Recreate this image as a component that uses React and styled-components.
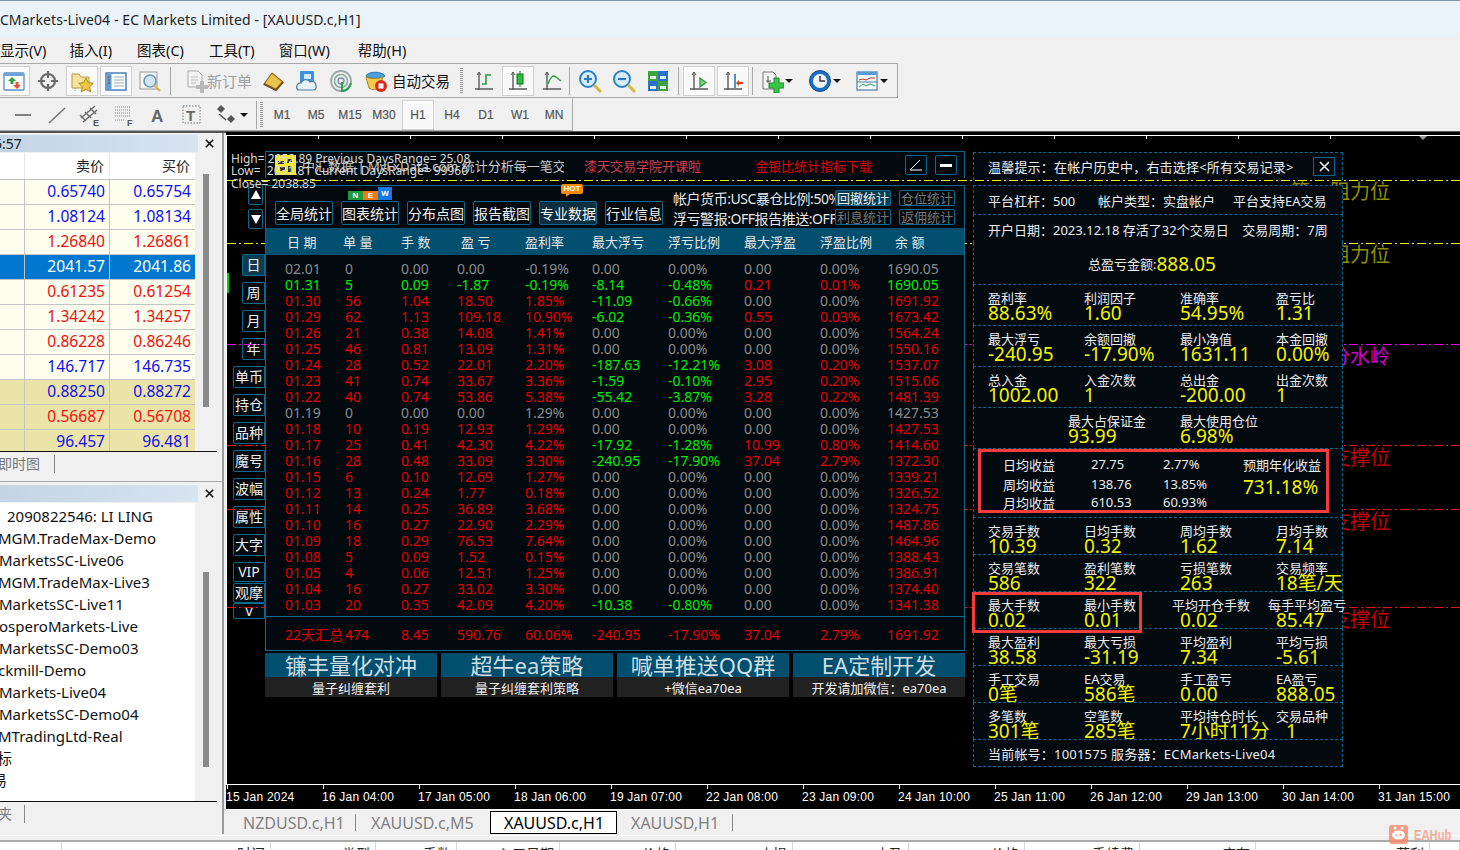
import React from "react";
import styled, { createGlobalStyle } from "styled-components";

const FONT = `"Noto Sans", "Noto Sans CJK SC", sans-serif`;
const TEAL = "#0b6a8c";
const PANEL = "#020a10";

const Global = createGlobalStyle`
  html, body { margin: 0; padding: 0; background: #f0f0f0; overflow: hidden; }
  #root { width: 1460px; height: 850px; }
`;

const Page = styled.div`
  width: 1460px; height: 850px; overflow: hidden; display: flex; flex-direction: column; position: relative;
  font-family: ${FONT}; font-size: 14px; color: #111; background: #f0f0f0;
`;
const TitleBar = styled.div`
  height: 36px; flex: none; background: #eaf3fa; border-top: 1px solid #7c95a6;
  display: flex; align-items: center; white-space: nowrap; font-size: 14px; color: #222;
`;
const TitleText = styled.span` margin-left: -8px; letter-spacing: .1px; `;
const MenuBar = styled.div`
  height: 26px; flex: none; display: flex; align-items: center; gap: 25px; padding-bottom: 2px; box-sizing: border-box;
  white-space: nowrap; font-size: 14.5px; color: #111;
`;
const MenuItem = styled.span` margin-left: ${p => p.$ml || 0}px; `;
const ToolRow = styled.div`
  height: ${p => p.$h}px; flex: none; display: flex; align-items: center; width: ${p => p.$w}px;
  border-top: 1px solid ${p => p.$top ? "#a8a8a8" : "transparent"};
  border-bottom: 1px solid #a8a8a8; border-right: 1px solid #a8a8a8; box-sizing: content-box; background: #f0f0f0;
`;
const ToolBottom = styled.div` height: 2px; flex: none; background: #555; `;
const Btn = styled.div`
  width: ${p => p.$w || 32}px; height: 30px; margin: 0 1px; flex: none; box-sizing: border-box;
  display: flex; align-items: center; justify-content: ${p => p.$w ? "flex-start" : "center"};
  padding-left: ${p => p.$pl || 0}px; white-space: nowrap;
  ${p => p.$first ? `margin-left: ${p.$first}px;` : ""}
  ${p => p.$on ? "background:#f9f9f9;border:1px solid #cfcfcf;outline:1px solid #fff;outline-offset:-2px;" : ""}
`;
const BtnLabel = styled.span`
  margin-left: ${p => p.$ml}px; font-size: ${p => p.$fs || 14}px; color: ${p => p.$c};
`;
const Sep = styled.div`
  width: 1px; height: 28px; background: #a8a8a8; flex: none;
  margin-left: ${p => p.$l}px; margin-right: ${p => p.$r}px;
`;
const Grip = styled.div`
  width: 3px; height: 26px; flex: none; margin-left: ${p => p.$l}px; margin-right: ${p => p.$r}px;
  background: repeating-linear-gradient(to bottom, #9a9a9a 0 1px, #f0f0f0 1px 2px);
`;
const Tf = styled.div`
  width: 32px; height: 30px; margin: 0 1px; flex: none; box-sizing: border-box;
  display: flex; align-items: center; justify-content: center;
  font-family: "Liberation Sans", sans-serif; font-size: 12px; color: #555; -webkit-text-stroke: .2px #555;
  ${p => p.$on ? "background:#f9f9f9;border:1px solid #cfcfcf;outline:1px solid #fff;outline-offset:-2px;" : ""}
`;
const Caret = styled.span`
  width: 0; height: 0; border-left: 4px solid transparent; border-right: 4px solid transparent;
  border-top: 4px solid #111; margin-left: ${p => p.$ml || 1}px;
`;

const Workspace = styled.div` flex: none; height: 701px; display: flex; `;
const Sidebar = styled.div`
  width: 222px; flex: none; display: flex; flex-direction: column; border-right: 1px solid #a0a0a0; background: #f0f0f0;
`;
const DockTitle = styled.div`
  height: 17px; flex: none; display: flex; margin-top: ${p => p.$mt}px; align-items: center;
`;
const TitleGrad = styled.div`
  width: 198px; height: 17px; flex: none; background: linear-gradient(to right, #c3d4e4, #d8e4f0);
  font-size: 14px; line-height: 17px; white-space: nowrap; overflow: hidden; color: #222;
`;
const ClippedClock = styled.span` margin-left: -14px; `;
const DockClose = styled.div`
  flex: 1; display: flex; justify-content: center; padding-right: 2px;
`;
const DockBody = styled.div`
  height: ${p => p.$h}px; flex: none; display: flex; width: 217px; margin-top: 1px; border-bottom: 1px solid #111; box-sizing: border-box;
`;
const DockMain = styled.div` width: 195px; flex: none; overflow: hidden; background: #fff; `;
const Scroll = styled.div` flex: 1; background: #f0f0f0; padding: ${p => p.$t}px 0 0 8px; box-sizing: border-box; `;
const Thumb = styled.div` width: 6px; height: ${p => p.$h}px; background: #8a8a8a; `;
const QuoteHead = styled.div`
  display: grid; grid-template-columns: 24px 85px 86px; height: 27px; background: #fff;
  border-bottom: 1px solid #c0c0c0; box-sizing: border-box;
`;
const HeadCell = styled.div`
  border-left: 1px solid #e4e4e4; text-align: right; padding-right: 5px; line-height: 26px; font-size: 14px; color: #222;
  &:first-child { border-left: 0; }
`;
const QuoteRow = styled.div`
  display: grid; grid-template-columns: 24px 85px 86px; height: 25px; box-sizing: border-box;
  border-bottom: 1px solid #c4c4c4; background: ${p => p.$bg}; color: ${p => p.$c};
`;
const QuoteCell = styled.div`
  border-left: 1px solid #c4c4c4; text-align: right; padding-right: 4px; line-height: 22px; font-size: 15.6px;
  &:first-child { border-left: 0; }
`;
const DockTabs = styled.div`
  height: ${p => p.$h}px; flex: none; width: 217px; display: flex; align-items: flex-start; padding-top: 3px; box-sizing: border-box;
`;
const DockTabText = styled.div`
  font-size: 14px; color: #777; margin-left: ${p => p.$ml}px; width: ${p => p.$w}px; border-right: 1px solid #888;
  height: 18px; line-height: 18px; overflow: hidden; white-space: nowrap; flex: none;
`;
const DockRule = styled.div` height: 1px; flex: none; background: #a8a8a8; `;
const NavItem = styled.div`
  height: 22px; line-height: 22px; font-size: 15px; white-space: nowrap; color: #111;
  margin-left: ${p => p.$x}px;
`;
const NavList = styled.div` padding-top: 2px; `;

const ChartCol = styled.div`
  flex: 1; display: flex; flex-direction: column; padding-left: 2px; border-left: 1px solid #999; min-width: 0;
`;
const Canvas = styled.div`
  height: 678px; flex: none; margin-top: -1px; background: #000; position: relative; overflow: hidden;
  display: flex; flex-direction: column; border-bottom: 1px solid #fff; box-sizing: border-box;
`;
const TopEdge = styled.div`
  margin-top: 3px; height: 5px; flex: none; border-top: 1px solid #fff; border-left: 1px solid #fff; box-sizing: border-box;
  background: repeating-linear-gradient(to right, transparent 0 91px, #fff 91px 92px);
  background-size: 92px 3px; background-repeat: repeat-x;
`;
const Plot = styled.div` flex: 1; border-left: 1px solid #fff; `;
const Axis = styled.div`
  height: 25px; flex: none; border-top: 1px solid #fff; display: flex; box-sizing: border-box; color: #fff;
  font-family: "Liberation Sans", sans-serif; font-size: 12px; letter-spacing: .22px; white-space: nowrap;
`;
const Tick = styled.div`
  width: 96px; flex: none; position: relative; padding-top: 5px; line-height: 14px;
  &::before { content: ""; position: absolute; left: 1px; top: 0; width: 1px; height: 4px; background: #fff; }
`;
const PriceLine = styled.div`
  position: absolute; left: 1px; right: 0; top: ${p => p.$y - 132}px; height: 1px; z-index: 3;
  background: repeating-linear-gradient(to right, ${p => p.$c} 0 9px, transparent 9px 12px, ${p => p.$c} 12px 14px, transparent 14px 17px);
`;
const PriceLabel = styled.div`
  position: absolute; right: 70px; top: ${p => p.$y - 132}px; font-size: 20px; line-height: 26px; color: ${p => p.$c}; z-index: 1;
  white-space: nowrap;
`;
const ShiftMark = styled.div`
  position: absolute; left: ${1419 - 226}px; top: 4px; width: 0; height: 0; z-index: 2;
  border-left: 4px solid transparent; border-right: 4px solid transparent; border-top: 4px solid #9a9a9a;
`;
const CandleBit = styled.div`
  position: absolute; left: 1px; top: ${273 - 132}px; width: 2px; height: 20px; background: #00d000; z-index: 2;
`;
const HiLo = styled.div`
  position: absolute; left: 5px; top: 21px; z-index: 6; font-size: 12px; line-height: 12.4px; color: #d8d8d8; white-space: pre;
  font-family: "Noto Sans", sans-serif;
`;

/* left side tabs */
const SideStack = styled.div`
  position: absolute; left: 0; top: ${184 - 132}px; width: 39px; display: flex; flex-direction: column; align-items: flex-end; z-index: 2;
`;
const Arrow = styled.div`
  width: 15px; height: ${p => p.$h}px; margin-right: 2px; margin-top: ${p => p.$mt || 0}px; border: 1px solid ${TEAL}; border-radius: 2px; box-sizing: border-box;
  display: flex; align-items: center; justify-content: center; background: ${PANEL};
`;
const SideTab = styled.div`
  width: ${p => p.$wide ? 32 : 23}px; height: ${p => p.$h || 22}px; margin-top: ${p => p.$mt ?? 6}px; box-sizing: border-box;
  border: 1px solid ${TEAL}; border-radius: 2px 0 0 2px;
  display: flex; align-items: center; justify-content: center; color: #eee; font-size: 14px; line-height: 1;
  background: ${p => p.$on ? "#0d3b4f" : PANEL};
`;

/* banner + main panel */
const Banner = styled.div`
  position: absolute; left: 39px; top: ${151 - 132}px; width: 700px; height: 27px; box-sizing: border-box; z-index: 4;
  background: ${PANEL}; border: 1px solid ${TEAL}; border-bottom: 0; display: flex; align-items: center; padding-left: 9px;
`;
const LogoBox = styled.div` width: 21px; height: 20px; flex: none; margin-right: 6px; `;
const BannerText = styled.div`
  width: 262px; flex: none; overflow: hidden; white-space: nowrap; font-size: 13px; color: #c9c9c9; margin-right: 20px;
`;
const BannerRed = styled.div`
  width: 117px; flex: none; white-space: nowrap; font-size: 13px; color: ${p => p.$c}; margin-right: ${p => p.$mr}px;
`;
const SqBtn = styled.div`
  width: 22px; height: 20px; flex: none; box-sizing: border-box; border: 1px solid ${TEAL}; border-radius: 2px; margin-left: ${p => p.$ml}px;
  display: flex; align-items: center; justify-content: center; background: ${PANEL};
`;
const Minus = styled.div` width: 12px; height: 3px; background: #fff; `;
const MainPanel = styled.div`
  position: absolute; left: 39px; top: ${185 - 132}px; width: 700px; height: 466px; box-sizing: border-box; z-index: 4;
  background: ${PANEL}; border: 1px solid ${TEAL}; display: flex; flex-direction: column;
`;
const PanelTools = styled.div`
  height: 42px; flex: none; position: relative; display: flex; align-items: flex-end; padding: 0 0 3px 9px; box-sizing: border-box; gap: 8px;
`;
const ToolBox = styled.div`
  width: 58px; height: 24px; flex: none; box-sizing: border-box; border: 1px solid ${TEAL}; border-radius: 2px;
  display: flex; align-items: center; justify-content: center; font-size: 14px; color: #f2f2f2; white-space: nowrap;
  background: ${p => p.$on ? "#0e2f40" : "#03090d"};
`;
const InfoCol = styled.div`
  width: 162px; flex: none; margin-left: 2px; height: 36px; font-size: 14px; line-height: 20px; color: #e8e8e8; white-space: nowrap;
  letter-spacing: -.45px;
`;
const MiniGrid = styled.div`
  display: grid; grid-template-columns: 56px 56px; grid-auto-rows: 16px; column-gap: 8px; row-gap: 3px; margin-left: -8px;
`;
const MiniBtn = styled.div`
  box-sizing: border-box; border: 1px solid ${TEAL}; border-radius: 2px; display: flex; align-items: center; justify-content: center;
  font-size: 13px; line-height: 1; white-space: nowrap; color: ${p => p.$on ? "#eee" : "#777"}; background: ${p => p.$on ? "#0b3a50" : "#03090d"};
`;
const Badges = styled.div`
  position: absolute; left: 82px; top: 1px; display: flex; align-items: flex-end; height: 13px;
`;
const Badge = styled.div`
  width: ${p => p.$w}px; height: ${p => p.$h}px; background: ${p => p.$c}; color: #fff; font-size: 8px; font-weight: 700; line-height: ${p => p.$h}px; text-align: center;
  font-family: "Liberation Sans", sans-serif;
`;
const Hot = styled.div`
  position: absolute; left: 295px; top: -2px; width: 22px; height: 10px; background: #f58a0b; color: #fff; font-size: 8px; font-weight: 700; line-height: 10px; text-align: center;
  border-radius: 2px; font-family: "Liberation Sans", sans-serif;
  &::after { content: ""; position: absolute; left: 5px; top: 10px; border-top: 3px solid #f58a0b; border-right: 4px solid transparent; }
`;
const GRID = "60px 56px 56px 68px 67px 76px 76px 76px 67px 1fr";
const TableHead = styled.div`
  height: 27px; flex: none; background: #004f6e; display: grid; grid-template-columns: ${GRID}; padding-left: 19px; align-items: center;
  color: #e6e6e6; font-size: 13px; white-space: pre;
`;
const HeadItem = styled.div` margin-left: ${p => p.$s || 0}px; `;
const TableBody = styled.div`
  flex: none; height: 362px; padding-top: 6px; box-sizing: border-box; border-bottom: 1px solid ${TEAL};
`;
const DataRow = styled.div`
  height: 16px; display: grid; grid-template-columns: ${GRID}; padding-left: 19px; font-size: 14px; line-height: 16px; white-space: nowrap;
`;
const DataCell = styled.div` color: ${p => p.$c}; `;
const SummaryRow = styled(DataRow)` margin-top: 10px; `;
const Promo = styled.div`
  position: absolute; left: 39px; top: ${653 - 132}px; width: 700px; display: grid; grid-template-columns: repeat(4, 172px); column-gap: 4px; z-index: 4;
`;
const PromoCard = styled.div` display: flex; flex-direction: column; `;
const PromoTop = styled.div`
  height: 24px; background: #004f6e; color: #cfdde2; font-size: 22px; line-height: 24px; text-align: center; white-space: nowrap;
`;
const PromoSub = styled.div`
  height: 20px; background: #222; color: #f0f0f0; font-size: 13px; line-height: 22px; text-align: center; white-space: nowrap;
`;

/* right panel */
const Right = styled.div`
  position: absolute; left: ${973 - 226}px; top: ${152 - 132}px; width: 370px; display: flex; flex-direction: column; z-index: 4;
  color: #ececec; font-size: 13px; white-space: nowrap;
`;
const RRow = styled.div`
  height: ${p => p.$h}px; flex: none; box-sizing: border-box; background: ${PANEL}; position: relative;
  border-left: 1px dashed ${TEAL}; border-right: 1px dashed ${TEAL}; border-top: 1px dashed ${TEAL};
  ${p => p.$end ? `border-bottom: 1px dashed ${TEAL};` : ""}
  margin-top: ${p => p.$mt || 0}px;
  ${p => p.$noTop ? "border-top: 0;" : ""}
`;
const LineRow = styled(RRow)`
  display: flex; align-items: center; padding-left: ${p => p.$pl ?? 14}px; padding-right: 7px; letter-spacing: ${p => p.$ls || 0}px;
`;
const LineSpan = styled.span` width: ${p => p.$w}px; flex: none; `;
const StatGrid = styled(RRow)`
  display: grid; grid-template-columns: repeat(4, 96px); padding: 5px 0 0 14px;
`;
const DuoGrid = styled(RRow)`
  display: grid; grid-template-columns: 112px 100px; padding: 5px 0 0 94px;
`;
const Cell = styled.div` display: flex; flex-direction: column; `;
const CellLabel = styled.div` height: 16px; line-height: 16px; margin-left: ${p => p.$s || 0}px; `;
const CellValue = styled.div`
  height: 15px; line-height: 15px; font-size: 19px; color: #f2f200; margin-left: ${p => p.$s || 0}px;
`;
const BigValue = styled.span` font-size: 19px; color: #f2f200; `;
const CloseX = styled.div`
  width: 22px; height: 19px; box-sizing: border-box; border: 1px solid ${TEAL}; display: flex; align-items: center; justify-content: center; margin-left: auto; flex: none;
`;
const RedBox = styled.div`
  margin: 0 0 0 4px; width: 351px; height: 64px; box-sizing: border-box; border: 3px solid #f33c3c;
  display: grid; grid-template-columns: 110px 72px 80px 1fr; grid-template-rows: 20px 20px 16px;
  padding-top: 2px; align-items: center; font-size: 13px;
`;
const YieldLabel = styled.div` text-align: right; padding-right: 36px; `;
const YieldBig = styled.div` font-size: 19px; color: #f2f200; grid-column: 4; grid-row: 2 / 4; align-self: start; line-height: 26px; `;
const RedMark = styled.div`
  position: absolute; left: -2px; top: 0; width: 170px; height: 41px; box-sizing: border-box; border: 3px solid #f33c3c; z-index: 2; pointer-events: none;
`;

const TabStrip = styled.div`
  flex: none; height: 24px; display: flex; align-items: flex-end; font-size: 16px; color: #808080; white-space: nowrap; padding-left: 17px;
`;
const DocTab = styled.div`
  height: 23px; display: flex; align-items: center; box-sizing: border-box; width: ${p => p.$w}px; padding-left: ${p => p.$pl}px; flex: none; position: relative;
  ${p => p.$on ? "background:#fff;color:#000;border:1px solid #000;" : ""}
  ${p => p.$sep ? "&::after{content:'';position:absolute;right:0;top:3px;height:17px;width:1px;background:#888;}" : ""}
`;
const Bottom = styled.div` flex: 1; display: flex; flex-direction: column; overflow: hidden; `;
const WhiteRule = styled.div` height: 1px; background: #fff; flex: none; margin-top: 1px; `;
const GrayRule = styled.div` height: 2px; background: #aaa; flex: none; margin-top: 4px; `;
const OrderHead = styled.div`
  flex: 1; background: #fff; display: grid; color: #222; font-size: 14px; overflow: hidden;
  grid-template-columns: 62px 209px 105px 81px 103px 116px 117px 116px 116px 115px 116px 174px 30px;
`;
const OrderCell = styled.div`
  border-right: 1px solid #d8d8d8; text-align: right; padding-right: 5px; line-height: 20px; padding-top: 2px; white-space: nowrap;
`;
const Water = styled.div`
  position: absolute; left: 1389px; top: 825px; display: flex; align-items: center; gap: 6px; opacity: .82;
  color: #f6a08a; font-weight: 700; font-size: 14px; font-family: "Liberation Sans", sans-serif;
`;
const WaterText = styled.span` display: block; transform: scaleX(.8); transform-origin: left center; `;

/* ---------- icons ---------- */
const S = ({ w = 24, h = 24, children }) => (
  <svg width={w} height={h} viewBox={`0 0 ${w} ${h}`} fill="none">{children}</svg>
);
const axes = (
  <>
    <path d="M7 3v18M3 20h18" stroke="#5a5a5a" strokeWidth="1.4" />
    <path d="M5 6l2-3 2 3" stroke="#5a5a5a" />
  </>
);
const I = {
  market: <S><rect x="2" y="4" width="20" height="17" rx="1" fill="#fff" stroke="#5c8fc4" strokeWidth="1.3" /><rect x="2" y="4" width="20" height="3" fill="#6ea3d8" /><path d="M10 8l-4 4h2.5v3h3v-3H14z" fill="#22a82e" /><path d="M15 20l4-4h-2.5v-3h-3v3H11z" fill="#e9503c" /></S>,
  cross: <S><circle cx="12" cy="12" r="7" stroke="#6a6a6a" strokeWidth="2.2" /><path d="M12 2v7M12 15v7M2 12h7M15 12h7" stroke="#6a6a6a" strokeWidth="2.2" /></S>,
  folder: <S><path d="M2 5h7l2 3h8v11H2z" fill="#f6e29a" stroke="#b59a4c" /><path d="M16 9l2.3 4.6 5 .7-3.6 3.5.9 5-4.6-2.4-4.6 2.4.9-5-3.6-3.5 5-.7z" fill="#eec63f" stroke="#a88a22" /><path d="M5 19v4" stroke="#888" strokeDasharray="1 1" /></S>,
  term: <S><rect x="2" y="4" width="20" height="17" fill="#fff" stroke="#3f78b4" strokeWidth="1.4" /><rect x="2.5" y="4.5" width="5" height="16" fill="#5b9bd8" /><path d="M10 8h10M10 11h10M10 14h10M10 17h10" stroke="#9aa7b4" /><path d="M4 8h2M4 11h2M4 14h2" stroke="#c0392b" /></S>,
  lens: <S><rect x="2" y="3" width="17" height="17" fill="#f4f4f4" stroke="#9a9a9a" /><circle cx="12" cy="12" r="6" fill="#cfe4f4" stroke="#6d96b8" strokeWidth="1.6" /><path d="M16 16l6 6" stroke="#d9b64a" strokeWidth="2.4" /></S>,
  order: <S><path d="M4 2h10l4 4v12H4z" fill="#f2f2f2" stroke="#aaa" /><path d="M7 8h7M7 11h7M7 14h5" stroke="#bbb" /><path d="M16 12h4v4h4v4h-4v4h-4v-4h-4v-4h4z" fill="#b9b9b9" /></S>,
  gold: <S><path d="M3 15L11 4l11 9-7 8z" fill="#e7c24c" stroke="#8d6a22" strokeWidth="1.2" /><path d="M3 15l12 6 7-8" stroke="#7a4f1a" strokeWidth="2" /></S>,
  base: <S><rect x="5" y="2" width="14" height="13" rx="1" fill="#3f90dc" /><rect x="9" y="5" width="7" height="5" fill="#cfe8fb" /><path d="M3 21a4 4 0 013-7 5 5 0 019-1 4 4 0 016 4 3 3 0 01-2 4z" fill="#e8f2fa" stroke="#4d7ea6" strokeWidth="1.2" /></S>,
  signal: <S><circle cx="12" cy="12" r="10" stroke="#9aa" strokeWidth="1.8" /><circle cx="12" cy="12" r="6.5" stroke="#8a9" strokeWidth="1.6" /><circle cx="12" cy="12" r="3" stroke="#78a" strokeWidth="1.4" /><path d="M13 13v9c5 0 8-4 9-8" stroke="#2aa14a" strokeWidth="2" /></S>,
  auto: <S><path d="M3 7c2-5 16-5 19 0-4 3-15 3-19 0z" fill="#4aa3e0" stroke="#2a78b4" /><path d="M3 8l3 11c3 2 6 2 9 1l5-12c-5 2-12 2-17 0z" fill="#f3cb48" stroke="#a88a22" /><circle cx="18" cy="17" r="6" fill="#d82a1c" /><rect x="15.5" y="14.5" width="5" height="5" fill="#fff" /></S>,
  bar: <S>{axes}<path d="M10 15h4V6h5" stroke="#2a9d3a" strokeWidth="1.6" /></S>,
  candle: <S>{axes}<path d="M14 2v16" stroke="#1c7a28" /><rect x="11" y="5" width="6" height="10" fill="#26c23a" stroke="#146c20" /></S>,
  line: <S>{axes}<path d="M8 15c2-6 5-10 8-7l5 4" stroke="#2a9d3a" strokeWidth="1.4" /></S>,
  zoomIn: <S><circle cx="10" cy="10" r="8" fill="#d9ecfa" stroke="#2a82c8" strokeWidth="2" /><path d="M6 10h8M10 6v8" stroke="#2a78c0" strokeWidth="2.2" /><path d="M16 16l7 7" stroke="#d8b544" strokeWidth="3" /></S>,
  zoomOut: <S><circle cx="10" cy="10" r="8" fill="#d9ecfa" stroke="#2a82c8" strokeWidth="2" /><path d="M6 10h8" stroke="#2a78c0" strokeWidth="2.2" /><path d="M16 16l7 7" stroke="#d8b544" strokeWidth="3" /></S>,
  tile: <S><rect x="2" y="2" width="10" height="10" fill="#3fa23f" /><rect x="12" y="2" width="10" height="10" fill="#2a72c8" /><rect x="2" y="12" width="10" height="10" fill="#2a72c8" /><rect x="12" y="12" width="10" height="10" fill="#3fa23f" /><path d="M4 7h6v3H4zM14 7h6v3h-6zM4 17h6v3H4zM14 17h6v3h-6z" fill="#e6f2e6" /></S>,
  play: <S>{axes}<path d="M13 9l6 4.5-6 4.5z" fill="#7ad884" stroke="#2a9a3a" strokeWidth="1.3" /></S>,
  shift: <S>{axes}<path d="M14 5v14" stroke="#1a6fa0" strokeWidth="1.5" /><path d="M22 13h-4v-2l-3 3 3 3v-2h4z" fill="#d8401e" /></S>,
  addDoc: <S><path d="M3 3h10l3 3v14H3z" fill="#f4f4f4" stroke="#777" /><path d="M8 7v7M6 12h5" stroke="#555" /><path d="M14 9h5v5h5v5h-5v5h-5v-5H9v-5h5z" fill="#37c648" stroke="#1f8a2c" /></S>,
  clock: <S><circle cx="12" cy="12" r="10.5" fill="#1a6fc4" stroke="#124f8e" /><circle cx="12" cy="12" r="7" fill="#f4f4f4" /><path d="M12 7v5h5" stroke="#333" strokeWidth="1.4" /></S>,
  win: <S><rect x="2" y="3" width="20" height="18" fill="#f4f9fd" stroke="#4a7ca8" strokeWidth="1.2" /><rect x="2" y="3" width="20" height="3" fill="#5c9ad2" /><path d="M4 11l4-1 3 1 4-2 5 0" stroke="#c0301c" /><path d="M4 18l4-3 3 2 4-2 5 2" stroke="#2aa14a" /><path d="M2 13h20" stroke="#4a7ca8" /></S>,
  hline: <S><path d="M5 12h16" stroke="#666" strokeWidth="1.6" /></S>,
  dline: <S><path d="M5 20L21 5" stroke="#777" strokeWidth="1.6" /></S>,
  chan: <S><path d="M3 15L17 3M5 19L19 7M2 12l6 6M7 9l6 6M12 5l6 6" stroke="#6a6a6a" strokeWidth="1.4" /><text x="15" y="23" fontSize="9" fontWeight="700" fontFamily="Liberation Sans" fill="#555">E</text></S>,
  fib: <S><path d="M3 4h16M3 7h16M3 10h16M3 13h16M3 17h10" stroke="#888" strokeDasharray="1 1" /><text x="15" y="23" fontSize="9" fontWeight="700" fontFamily="Liberation Sans" fill="#555">F</text></S>,
  textA: <S><text x="5" y="19" fontSize="17" fontWeight="700" fontFamily="Liberation Sans" fill="#666">A</text></S>,
  textT: <S><rect x="3" y="3" width="17" height="17" stroke="#777" strokeDasharray="1.5 1.5" /><text x="6" y="18" fontSize="15" fontWeight="700" fontFamily="Liberation Sans" fill="#666">T</text></S>,
  shapes: <S><path d="M3 6l4-4 4 4-4 4zM13 16l4-4 4 4-4 4z" fill="#555" /><path d="M5 11l7 6" stroke="#555" strokeWidth="1.6" /></S>,
};
const X = ({ c = "#111", s = 9, w = 1.6 }) => (
  <svg width={s} height={s} viewBox="0 0 9 9"><path d="M.8.8l7.4 7.4M8.2.8L.8 8.2" stroke={c} strokeWidth={w} /></svg>
);
const Tri = ({ up }) => (
  <svg width="10" height="9" viewBox="0 0 10 9"><path d={up ? "M5 0l5 9H0z" : "M5 9l5-9H0z"} fill="#fff" /></svg>
);

/* ---------- data ---------- */
const RED = "#e40000", GREEN = "#00ee00", GRAY = "#8a8a8a";
const H = ["日 期", "单 量", "手 数", "盈 亏", "盈利率", "最大浮亏", "浮亏比例", "最大浮盈", "浮盈比例", "余 额"];
const Hs = [2, -2, 0, 4, 0, 0, 0, 0, 0, 8];
const Z = ["0.00", "0.00%", "0.00", "0.00%"];
const rows = [
  ["g", "02.01", "0", "0.00", "0.00", "-0.19%", ...Z, "1690.05"],
  ["n", "01.31", "5", "0.09", "-1.87", "-0.19%", "-8.14", "-0.48%", "0.21", "0.01%", "1690.05"],
  ["r", "01.30", "56", "1.04", "18.50", "1.85%", "-11.09", "-0.66%", "0.00", "0.00%", "1691.92"],
  ["r", "01.29", "62", "1.13", "109.18", "10.90%", "-6.02", "-0.36%", "0.55", "0.03%", "1673.42"],
  ["r", "01.26", "21", "0.38", "14.08", "1.41%", ...Z, "1564.24"],
  ["r", "01.25", "46", "0.81", "13.09", "1.31%", ...Z, "1550.16"],
  ["r", "01.24", "28", "0.52", "22.01", "2.20%", "-187.63", "-12.21%", "3.08", "0.20%", "1537.07"],
  ["r", "01.23", "41", "0.74", "33.67", "3.36%", "-1.59", "-0.10%", "2.95", "0.20%", "1515.06"],
  ["r", "01.22", "40", "0.74", "53.86", "5.38%", "-55.42", "-3.87%", "3.28", "0.22%", "1481.39"],
  ["g", "01.19", "0", "0.00", "0.00", "1.29%", ...Z, "1427.53"],
  ["r", "01.18", "10", "0.19", "12.93", "1.29%", ...Z, "1427.53"],
  ["r", "01.17", "25", "0.41", "42.30", "4.22%", "-17.92", "-1.28%", "10.99", "0.80%", "1414.60"],
  ["r", "01.16", "28", "0.48", "33.09", "3.30%", "-240.95", "-17.90%", "37.04", "2.79%", "1372.30"],
  ["r", "01.15", "6", "0.10", "12.69", "1.27%", ...Z, "1339.21"],
  ["r", "01.12", "13", "0.24", "1.77", "0.18%", ...Z, "1326.52"],
  ["r", "01.11", "14", "0.25", "36.89", "3.68%", ...Z, "1324.75"],
  ["r", "01.10", "16", "0.27", "22.90", "2.29%", ...Z, "1487.86"],
  ["r", "01.09", "18", "0.29", "76.53", "7.64%", ...Z, "1464.96"],
  ["r", "01.08", "5", "0.09", "1.52", "0.15%", ...Z, "1388.43"],
  ["r", "01.05", "4", "0.06", "12.51", "1.25%", ...Z, "1386.91"],
  ["r", "01.04", "16", "0.27", "33.02", "3.30%", ...Z, "1374.40"],
  ["r", "01.03", "20", "0.35", "42.09", "4.20%", "-10.38", "-0.80%", "0.00", "0.00%", "1341.38"],
];
const cellColor = (kind, i, v) => {
  if (kind === "g") return GRAY;
  const base = kind === "n" ? GREEN : RED;
  if (i < 5 || i === 9) return base;
  if (i === 5 || i === 6) return v.startsWith("-") ? GREEN : GRAY;
  return /^0\.00/.test(v) ? GRAY : RED;
};
const quotes = [
  ["0.65740", "0.65754", "#1010f0", "#fefeee"], ["1.08124", "1.08134", "#1010f0", "#fefeee"],
  ["1.26840", "1.26861", "#f01010", "#fefeee"], ["2041.57", "2041.86", "#fff", "#0078d0"],
  ["0.61235", "0.61254", "#f01010", "#fefeee"], ["1.34242", "1.34257", "#f01010", "#fefeee"],
  ["0.86228", "0.86246", "#f01010", "#fefeee"], ["146.717", "146.735", "#1010f0", "#fefeee"],
  ["0.88250", "0.88272", "#1010f0", "#ebe4a9"], ["0.56687", "0.56708", "#f01010", "#ebe4a9"],
  ["96.457", "96.481", "#1010f0", "#ebe4a9"],
];
const nav = [
  ["2090822546: LI LING", 7], ["MGM.TradeMax-Demo", -2], ["MarketsSC-Live06", -1], ["MGM.TradeMax-Live3", -2],
  ["MarketsSC-Live11", -1], ["osperoMarkets-Live", -1], ["MarketsSC-Demo03", -1], ["ckmill-Demo", -2],
  ["Markets-Live04", -1], ["MarketsSC-Demo04", -1], ["MTradingLtd-Real", -2], ["标", -3], ["易", -8],
];
const times = ["15 Jan 2024", "16 Jan 04:00", "17 Jan 05:00", "18 Jan 06:00", "19 Jan 07:00", "22 Jan 08:00", "23 Jan 09:00", "24 Jan 10:00", "25 Jan 11:00", "26 Jan 12:00", "29 Jan 13:00", "30 Jan 14:00", "31 Jan 15:00"];
const lines = [[180, "#f0f000"], [243, "#f0f000"], [344, "#f000f0"], [445, "#e01818"], [509, "#e01818"], [607, "#e01818"]];
const labels = [[179, "第一阻力位", "#8f8f00"], [242, "第二阻力位", "#8f8f00"], [344, "分水岭", "#d000d0"], [445, "第一支撑位", "#c40000"], [509, "第二支撑位", "#c40000"], [607, "第三支撑位", "#c40000"]];
const promos = [["镰丰量化对冲", "量子纠缠套利"], ["超牛ea策略", "量子纠缠套利策略"], ["喊单推送QQ群", "+微信ea70ea"], ["EA定制开发", "开发请加微信：ea70ea"]];
const orderCols = ["", "时间", "类型", "手数", "入口日期", "价格", "止损", "止盈", "价格", "手续费", "库存", "获利", ""];

const Stats = ({ items, h = 41 }) => (
  <StatGrid $h={h}>
    {items.map(([l, v, ls, vs]) => (
      <Cell key={l}><CellLabel $s={ls}>{l}</CellLabel><CellValue $s={vs}>{v}</CellValue></Cell>
    ))}
  </StatGrid>
);

export default function App() {
  return (
    <Page>
      <Global />
      <TitleBar><TitleText>ECMarkets-Live04 - EC Markets Limited - [XAUUSD.c,H1]</TitleText></TitleBar>
      <MenuBar>
        <span>显示(V)</span><MenuItem $ml={-2}>插入(I)</MenuItem><span>图表(C)</span><span>工具(T)</span><MenuItem $ml={-1}>窗口(W)</MenuItem><MenuItem $ml={3}>帮助(H)</MenuItem>
      </MenuBar>
      <ToolRow $w={897} $h={33} $top>
        <Btn $first={-2} $on>{I.market}</Btn>
        <Btn>{I.cross}</Btn><Btn $on>{I.folder}</Btn><Btn $on>{I.term}</Btn><Btn>{I.lens}</Btn>
        <Sep $l={3} $r={8} />
        <Btn $w={75} $pl={4}>{I.order}<BtnLabel $ml={-1} $fs={15} $c="#a0a0a0">新订单</BtnLabel></Btn>
        <Btn>{I.gold}</Btn><Btn>{I.base}</Btn><Btn>{I.signal}</Btn>
        <Btn $w={96} $pl={4}>{I.auto}<BtnLabel $ml={5} $fs={14.5} $c="#111">自动交易</BtnLabel></Btn>
        <Grip $l={4} $r={4} />
        <Btn>{I.bar}</Btn><Btn $on>{I.candle}</Btn><Btn>{I.line}</Btn>
        <Sep $l={0} $r={3} />
        <Btn>{I.zoomIn}</Btn><Btn>{I.zoomOut}</Btn><Btn>{I.tile}</Btn>
        <Sep $l={3} $r={3} />
        <Btn $on>{I.play}</Btn><Btn $on>{I.shift}</Btn>
        <Sep $l={2} $r={2} />
        <Btn $w={45} $pl={4}>{I.addDoc}<Caret /></Btn>
        <Btn $w={45} $pl={5}>{I.clock}<Caret /></Btn>
        <Btn $w={44} $pl={5}>{I.win}<Caret /></Btn>
      </ToolRow>
      <ToolRow $w={572} $h={31}>
        <Btn $first={6}>{I.hline}</Btn><Btn>{I.dline}</Btn><Btn>{I.chan}</Btn><Btn>{I.fib}</Btn><Btn>{I.textA}</Btn><Btn>{I.textT}</Btn>
        <Btn $w={44} $pl={4}>{I.shapes}<Caret $ml={2} /></Btn>
        <Sep $l={1} $r={3} />
        <Grip $l={0} $r={2} />
        <Tf>M1</Tf><Tf>M5</Tf><Tf>M15</Tf><Tf>M30</Tf><Tf $on>H1</Tf><Tf>H4</Tf><Tf>D1</Tf><Tf>W1</Tf><Tf>MN</Tf>
      </ToolRow>
      <ToolBottom />
      <Workspace>
        <Sidebar>
          <DockTitle $mt={2}>
            <TitleGrad><ClippedClock>16:57</ClippedClock></TitleGrad>
            <DockClose><X /></DockClose>
          </DockTitle>
          <DockBody $h={299}>
            <DockMain>
              <QuoteHead><HeadCell /><HeadCell>卖价</HeadCell><HeadCell>买价</HeadCell></QuoteHead>
              {quotes.map(([a, b, c, bg]) => (
                <QuoteRow key={a} $c={c} $bg={bg}><QuoteCell /><QuoteCell>{a}</QuoteCell><QuoteCell>{b}</QuoteCell></QuoteRow>
              ))}
            </DockMain>
            <Scroll $t={21}><Thumb $h={233} /></Scroll>
          </DockBody>
          <DockTabs $h={29}><DockTabText $ml={-2} $w={56}>即时图</DockTabText></DockTabs>
          <DockRule />
          <DockTitle $mt={3}>
            <TitleGrad />
            <DockClose><X /></DockClose>
          </DockTitle>
          <DockBody $h={299}>
            <DockMain>
              <NavList>{nav.map(([t, x]) => <NavItem key={t} $x={x}>{t}</NavItem>)}</NavList>
            </DockMain>
            <Scroll $t={69}><Thumb $h={195} /></Scroll>
          </DockBody>
          <DockTabs $h={28}><DockTabText $ml={-2} $w={26}>夹</DockTabText></DockTabs>
        </Sidebar>
        <ChartCol>
          <Canvas>
            <TopEdge />
            <Plot />
            <Axis>{times.map(t => <Tick key={t}>{t}</Tick>)}</Axis>

            <ShiftMark />
            <CandleBit />
            {lines.map(([y, c]) => <PriceLine key={y} $y={y} $c={c} />)}
            {labels.map(([y, t, c]) => <PriceLabel key={y} $y={y} $c={c}>{t}</PriceLabel>)}

            <HiLo>{"High= 2052.89 Previous DaysRange= 25.08\nLow=  2031.81 Current DaysRange= 99960\nClose= 2038.85"}</HiLo>

            <SideStack>
              <Arrow $h={21}><Tri up /></Arrow>
              <Arrow $h={20} $mt={4}><Tri /></Arrow>
              <SideTab $mt={25} $on>日</SideTab>
              <SideTab>周</SideTab><SideTab>月</SideTab><SideTab>年</SideTab>
              {["单币", "持仓", "品种", "魔号", "波幅", "属性", "大字"].map(t => <SideTab key={t} $wide>{t}</SideTab>)}
              <SideTab $wide $h={20}>VIP</SideTab>
              <SideTab $wide $mt={1} $h={20}>观摩</SideTab>
              <SideTab $wide $mt={0} $h={16}>v</SideTab>
            </SideStack>

            <Banner>
              <LogoBox>
                <svg width="21" height="20" viewBox="0 0 21 20"><rect width="21" height="20" fill="#f6e72a" /><path d="M3 6h6v3H3zM12 4h5v4h-5zM5 12h5v4H5zM13 11h4v6h-4z" fill="#333" /></svg>
              </LogoBox>
              <BannerText>中汇数据 | MyFxData.com 统计分析每一笔交易</BannerText>
              <BannerRed $c="#d83a52" $mr={54}>漆天交易学院开课啦</BannerRed>
              <BannerRed $c="#e00000" $mr={11}>金银比统计指标下载</BannerRed>
              <SqBtn $ml={22}>
                <svg width="14" height="12" viewBox="0 0 14 12"><path d="M1 11L11 1M1 11h12" stroke="#fff" strokeWidth="1" /></svg>
              </SqBtn>
              <SqBtn $ml={8}><Minus /></SqBtn>
            </Banner>

            <MainPanel>
              <PanelTools>
                <Badges>
                  <Badge $w={15} $h={9} $c="#1e9a3a">N</Badge>
                  <Badge $w={15} $h={9} $c="#f07a10">E</Badge>
                  <Badge $w={14} $h={13} $c="#1478e8">W</Badge>
                </Badges>
                <Hot>HOT</Hot>
                {["全局统计", "图表统计", "分布点图", "报告截图"].map(t => <ToolBox key={t}>{t}</ToolBox>)}
                <ToolBox $on>专业数据</ToolBox>
                <ToolBox>行业信息</ToolBox>
                <InfoCol>帐户货币:USC暴仓比例:50%<br />浮亏警报:OFF报告推送:OFF</InfoCol>
                <MiniGrid>
                  <MiniBtn $on>回撤统计</MiniBtn><MiniBtn>仓位统计</MiniBtn>
                  <MiniBtn>利息统计</MiniBtn><MiniBtn>返佣统计</MiniBtn>
                </MiniGrid>
              </PanelTools>
              <TableHead>{H.map((t, i) => <HeadItem key={t} $s={Hs[i]}>{t}</HeadItem>)}</TableHead>
              <TableBody>
                {rows.map(([k, ...cells]) => (
                  <DataRow key={cells[0]}>
                    {cells.map((v, i) => <DataCell key={i} $c={cellColor(k, i, v)}>{v}</DataCell>)}
                  </DataRow>
                ))}
              </TableBody>
              <SummaryRow>
                {["22天汇总", "474", "8.45", "590.76", "60.06%", "-240.95", "-17.90%", "37.04", "2.79%", "1691.92"].map(v => <DataCell key={v} $c={RED}>{v}</DataCell>)}
              </SummaryRow>
            </MainPanel>

            <Promo>
              {promos.map(([a, b]) => <PromoCard key={a}><PromoTop>{a}</PromoTop><PromoSub>{b}</PromoSub></PromoCard>)}
            </Promo>

            <Right>
              <LineRow $h={28} $ls={0.2}>
                <span>温馨提示：在帐户历史中，右击选择&lt;所有交易记录&gt;</span>
                <CloseX><X c="#fff" s={11} w={1.2} /></CloseX>
              </LineRow>
              <LineRow $h={29} $mt={5}>
                <LineSpan $w={110}>平台杠杆：500</LineSpan><LineSpan $w={135}>帐户类型：实盘帐户</LineSpan><span>平台支持EA交易</span>
              </LineRow>
              <LineRow $h={29}>开户日期：2023.12.18 存活了32个交易日&nbsp;&nbsp;&nbsp;&nbsp;交易周期：7周</LineRow>
              <LineRow $h={41} $noTop $pl={114}>总盈亏金额:<BigValue>888.05</BigValue></LineRow>
              <Stats items={[["盈利率", "88.63%"], ["利润因子", "1.60"], ["准确率", "54.95%"], ["盈亏比", "1.31"]]} />
              <Stats items={[["最大浮亏", "-240.95"], ["余额回撤", "-17.90%"], ["最小净值", "1631.11"], ["本金回撤", "0.00%"]]} />
              <Stats items={[["总入金", "1002.00"], ["入金次数", "1"], ["总出金", "-200.00"], ["出金次数", "1"]]} />
              <DuoGrid $h={41}>
                <Cell><CellLabel>最大占保证金</CellLabel><CellValue>93.99</CellValue></Cell>
                <Cell><CellLabel>最大使用仓位</CellLabel><CellValue>6.98%</CellValue></Cell>
              </DuoGrid>
              <RRow $h={69}>
                <RedBox>
                  <YieldLabel>日均收益</YieldLabel><div>27.75</div><div>2.77%</div><div>预期年化收益</div>
                  <YieldLabel>周均收益</YieldLabel><div>138.76</div><div>13.85%</div><YieldBig>731.18%</YieldBig>
                  <YieldLabel>月均收益</YieldLabel><div>610.53</div><div>60.93%</div>
                </RedBox>
              </RRow>
              <Stats h={37} items={[["交易手数", "10.39"], ["日均手数", "0.32"], ["周均手数", "1.62"], ["月均手数", "7.14"]]} />
              <Stats h={37} items={[["交易笔数", "586"], ["盈利笔数", "322"], ["亏损笔数", "263"], ["交易频率", "18笔/天"]]} />
              <StatGrid $h={37}>
                <RedMark />
                {[["最大手数", "0.02"], ["最小手数", "0.01"], ["平均开仓手数", "0.02", -8], ["每手平均盈亏", "85.47", -8]].map(([l, v, s]) => (
                  <Cell key={l}><CellLabel $s={s}>{l}</CellLabel><CellValue>{v}</CellValue></Cell>
                ))}
              </StatGrid>
              <Stats h={37} items={[["最大盈利", "38.58"], ["最大亏损", "-31.19"], ["平均盈利", "7.34"], ["平均亏损", "-5.61"]]} />
              <Stats h={37} items={[["手工交易", "0笔"], ["EA交易", "586笔"], ["手工盈亏", "0.00"], ["EA盈亏", "888.05"]]} />
              <Stats h={37} items={[["多笔数", "301笔"], ["空笔数", "285笔"], ["平均持仓时长", "7小时11分"], ["交易品种", "1", 0, 10]]} />
              <LineRow $h={28} $end $ls={0.2}>当前帐号：1001575 服务器：ECMarkets-Live04</LineRow>
            </Right>
          </Canvas>
          <TabStrip>
            <DocTab $w={113} $pl={0} $sep>NZDUSD.c,H1</DocTab>
            <DocTab $w={134} $pl={15}>XAUUSD.c,M5</DocTab>
            <DocTab $on $w={127} $pl={13}>XAUUSD.c,H1</DocTab>
            <DocTab $w={116} $pl={14} $sep>XAUUSD,H1</DocTab>
          </TabStrip>
        </ChartCol>
      </Workspace>
      <Bottom>
        <WhiteRule />
        <GrayRule />
        <OrderHead>{orderCols.map((c, i) => <OrderCell key={i}>{c}</OrderCell>)}</OrderHead>
      </Bottom>
      <Water>
        <svg width="19" height="19" viewBox="0 0 19 19"><rect width="19" height="19" rx="3" fill="#f88a6e" /><circle cx="6" cy="3" r="1.5" fill="#fff" /><circle cx="13" cy="3" r="1.5" fill="#fff" /><ellipse cx="9.5" cy="10" rx="6.5" ry="4.5" fill="#fff" /><circle cx="7.5" cy="10" r="1" fill="#f88a6e" /><circle cx="11.5" cy="10" r="1" fill="#f88a6e" /></svg>
        <WaterText>EAHub</WaterText>
      </Water>
    </Page>
  );
}
